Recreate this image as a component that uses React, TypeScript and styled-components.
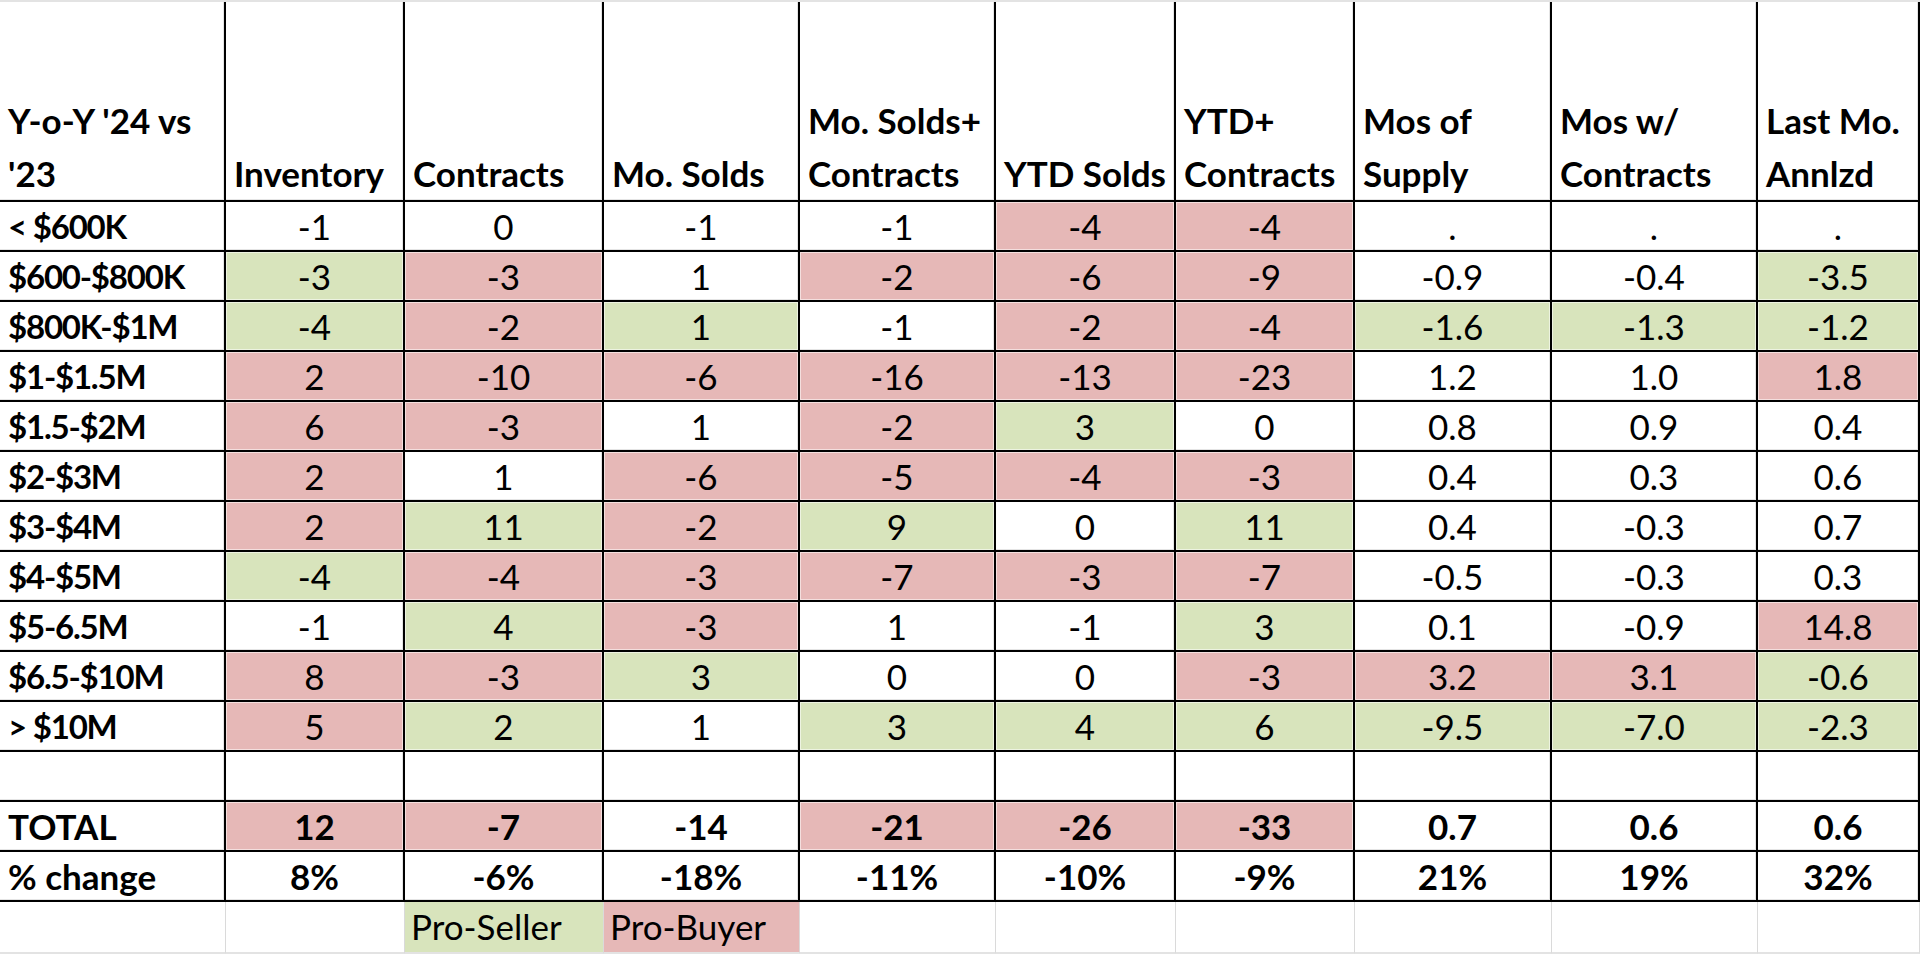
import React from "react";
import styled, { createGlobalStyle, css } from "styled-components";

type Fill = "g" | "p" | "";

const GREEN = "#d8e4bc";
const PINK = "#e6b8b7";

const GlobalStyle = createGlobalStyle`
  html, body {
    margin: 0;
    padding: 0;
    background: #fff;
  }
  body {
    font-family: Lato, "Open Sans", sans-serif;
    color: #000;
  }
`;

const Sheet = styled.div`
  display: grid;
  grid-template-columns: 226px 179px 199px 196px 196px 180px 179px 197px 206px 162px;
  grid-template-rows: 200px repeat(14, 50px) 52px;
  width: 1920px;
  height: 954px;
  box-sizing: border-box;
  border-top: 2px solid #e3e3e3;
  overflow: hidden;
`;

const fillColor = (f?: Fill) => (f === "g" ? GREEN : f === "p" ? PINK : "#fff");

const HeaderCell = styled.div<{ $center?: boolean }>`
  box-sizing: border-box;
  display: flex;
  align-items: flex-end;
  justify-content: ${(p) => (p.$center ? "center" : "flex-start")};
  padding: 0 8px;
  border-right: 2px solid #000;
  border-bottom: 2px solid #000;
  box-shadow: inset -1px -1px 0 #e4e4e4;
  font-size: 35px;
  font-weight: 700;
  line-height: 53px;
  white-space: nowrap;
`;

const Cell = styled.div<{ $fill?: Fill; $bold?: boolean; $label?: boolean; $tight?: boolean }>`
  box-sizing: border-box;
  padding: 0 8px;
  border-right: 2px solid #000;
  border-bottom: 2px solid #000;
  background: ${(p) => fillColor(p.$fill)};
  box-shadow: ${(p) =>
    p.$fill ? "inset 0 0 0 1px rgba(255,255,255,0.55)" : "inset -1px -1px 0 #e4e4e4"};
  font-size: 35px;
  line-height: 48px;
  font-weight: ${(p) => (p.$bold || p.$label ? 700 : 400)};
  text-align: ${(p) => (p.$label ? "left" : "center")};
  white-space: nowrap;
  ${(p) =>
    p.$tight &&
    css`
      font-size: 33px;
      letter-spacing: -1.2px;
    `}
`;

const LegendCell = styled.div<{ $fill?: Fill }>`
  box-sizing: border-box;
  padding: 0 6px;
  border-right: 1px solid #dadada;
  border-bottom: 2px solid #e3e3e3;
  background: ${(p) => fillColor(p.$fill)};
  font-size: 35px;
  line-height: 48px;
  white-space: nowrap;
`;

const headers: { lines: string[]; center?: boolean }[] = [
  { lines: ["Y-o-Y '24 vs", "'23"] },
  { lines: ["Inventory"] },
  { lines: ["Contracts"] },
  { lines: ["Mo. Solds"] },
  { lines: ["Mo. Solds+", "Contracts"] },
  { lines: ["YTD Solds"], center: true },
  { lines: ["YTD+", "Contracts"] },
  { lines: ["Mos of", "Supply"] },
  { lines: ["Mos w/", "Contracts"] },
  { lines: ["Last Mo.", "Annlzd"] },
];

// each value: "text|fill"
const rows: [string, string[]][] = [
  ["< $600K", ["-1", "0", "-1", "-1", "-4|p", "-4|p", ".", ".", "."]],
  ["$600-$800K", ["-3|g", "-3|p", "1", "-2|p", "-6|p", "-9|p", "-0.9", "-0.4", "-3.5|g"]],
  ["$800K-$1M", ["-4|g", "-2|p", "1|g", "-1", "-2|p", "-4|p", "-1.6|g", "-1.3|g", "-1.2|g"]],
  ["$1-$1.5M", ["2|p", "-10|p", "-6|p", "-16|p", "-13|p", "-23|p", "1.2", "1.0", "1.8|p"]],
  ["$1.5-$2M", ["6|p", "-3|p", "1", "-2|p", "3|g", "0", "0.8", "0.9", "0.4"]],
  ["$2-$3M", ["2|p", "1", "-6|p", "-5|p", "-4|p", "-3|p", "0.4", "0.3", "0.6"]],
  ["$3-$4M", ["2|p", "11|g", "-2|p", "9|g", "0", "11|g", "0.4", "-0.3", "0.7"]],
  ["$4-$5M", ["-4|g", "-4|p", "-3|p", "-7|p", "-3|p", "-7|p", "-0.5", "-0.3", "0.3"]],
  ["$5-6.5M", ["-1", "4|g", "-3|p", "1", "-1", "3|g", "0.1", "-0.9", "14.8|p"]],
  ["$6.5-$10M", ["8|p", "-3|p", "3|g", "0", "0", "-3|p", "3.2|p", "3.1|p", "-0.6|g"]],
  ["> $10M", ["5|p", "2|g", "1", "3|g", "4|g", "6|g", "-9.5|g", "-7.0|g", "-2.3|g"]],
  ["", ["", "", "", "", "", "", "", "", ""]],
  ["TOTAL", ["12|p", "-7|p", "-14", "-21|p", "-26|p", "-33|p", "0.7", "0.6", "0.6"]],
  ["% change", ["8%", "-6%", "-18%", "-11%", "-10%", "-9%", "21%", "19%", "32%"]],
];

const legend: [string, Fill][] = [
  ["", ""],
  ["", ""],
  ["Pro-Seller", "g"],
  ["Pro-Buyer", "p"],
  ["", ""],
  ["", ""],
  ["", ""],
  ["", ""],
  ["", ""],
  ["", ""],
];

export default function App() {
  return (
    <>
      <GlobalStyle />
      <Sheet>
        {headers.map((h, i) => (
          <HeaderCell key={`h${i}`} $center={h.center}>
            <div>
              {h.lines.map((l, j) => (
                <div key={j}>{l}</div>
              ))}
            </div>
          </HeaderCell>
        ))}
        {rows.map(([label, vals], r) => {
          const bold = label === "TOTAL" || label === "% change";
          return (
            <React.Fragment key={`r${r}`}>
              <Cell $label $tight={label.includes("$")}>
                {label}
              </Cell>
              {vals.map((v, c) => {
                const [text, fill] = v.split("|");
                return (
                  <Cell key={c} $fill={(fill as Fill) || ""} $bold={bold}>
                    {text}
                  </Cell>
                );
              })}
            </React.Fragment>
          );
        })}
        {legend.map(([text, fill], i) => (
          <LegendCell key={`l${i}`} $fill={fill}>
            {text}
          </LegendCell>
        ))}
      </Sheet>
    </>
  );
}
